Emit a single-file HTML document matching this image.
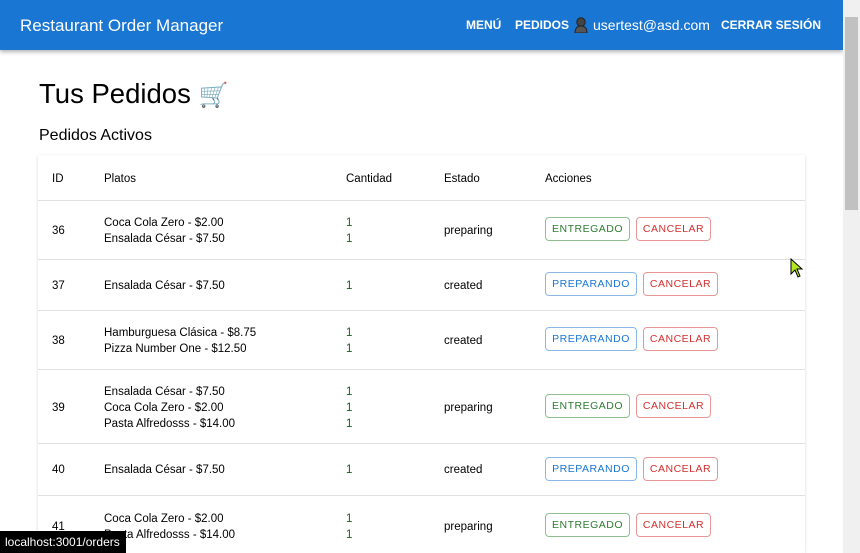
<!DOCTYPE html>
<html><head><meta charset="utf-8"><style>
*{margin:0;padding:0;box-sizing:border-box}
html,body{width:860px;height:553px;overflow:hidden}
body{background:#fff;font-family:"Liberation Sans",Arial,sans-serif;position:relative;color:#000}
.bar{position:absolute;left:0;top:0;width:843px;height:50px;background:#1976d2;box-shadow:0 2px 4px rgba(0,0,0,.3);color:#fff;z-index:2}
.bar .t{position:absolute;left:20px;top:16px;font-size:17px}
.bar .n{position:absolute;top:18px;font-size:12px;font-weight:bold;letter-spacing:0}
.sb{position:absolute;right:0;top:0;width:17px;height:553px;background:#f0f0f0;z-index:4}
.sb .th{position:absolute;left:2px;top:17px;width:13px;height:193px;background:#c1c1c1}
h1{position:absolute;left:39px;top:78px;font-size:27.5px;font-weight:normal}
h2{position:absolute;left:39px;top:127px;font-size:16px;font-weight:normal}
.card{position:absolute;left:38px;top:155px;width:767px;height:398px;background:#fff;box-shadow:0 1px 3px rgba(0,0,0,.15)}
.row{position:absolute;left:0;width:767px;border-top:1px solid #e0e0e0;font-size:11.5px}
.c{position:absolute;line-height:16px;margin-top:1px}
.q{color:#1b5e20}
.btn{position:absolute;height:24px;border:1px solid;border-radius:4px;font-size:10.5px;letter-spacing:.5px;line-height:23px;text-align:center}
.g{color:#2e7d32;border-color:#8fbf91}
.b{color:#1976d2;border-color:#8ab8e8}
.r{color:#d32f2f;border-color:#e89797}
.status{position:absolute;left:0;top:531px;width:126px;height:22px;background:#000;color:#fff;font-size:12px;line-height:22px;padding-left:5px;z-index:3}
</style></head><body>
<div class="bar"><div class="t">Restaurant Order Manager</div>
<div class="n" style="left:466px">MENÚ</div>
<div class="n" style="left:515px">PEDIDOS</div>
<svg style="position:absolute;left:574px;top:17px" width="14" height="16" viewBox="0 0 14 16"><circle cx="7" cy="5" r="4.2" fill="#444" stroke="#222"/><path d="M1 16 Q1 9 7 9 Q13 9 13 16Z" fill="#555" stroke="#222"/></svg>
<div class="n" style="left:593px;font-weight:normal;font-size:14px;top:17px">usertest@asd.com</div>
<div class="n" style="left:721px">CERRAR SESIÓN</div></div>
<h1>Tus Pedidos <span style="font-size:24px">🛒</span></h1>
<h2>Pedidos Activos</h2>
<div class="card">
<div class="row" style="top:0;height:45px;border:none"><div class="c" style="left:14px;top:15px">ID</div><div class="c" style="left:66px;top:15px">Platos</div><div class="c" style="left:308px;top:15px">Cantidad</div><div class="c" style="left:406px;top:15px">Estado</div><div class="c" style="left:507px;top:15px">Acciones</div></div>
<div class="row" style="top:45px;height:59px"><div class="c" style="left:14px;top:21px">36</div><div class="c" style="left:66px;top:13px">Coca Cola Zero - $2.00<br>Ensalada César - $7.50</div><div class="c q" style="left:308px;top:13px">1<br>1</div><div class="c" style="left:406px;top:21px">preparing</div><div class="btn g" style="left:507px;top:16px;width:85px">ENTREGADO</div><div class="btn r" style="left:598px;top:16px;width:75px">CANCELAR</div></div>
<div class="row" style="top:104px;height:51px"><div class="c" style="left:14px;top:17px">37</div><div class="c" style="left:66px;top:17px">Ensalada César - $7.50</div><div class="c q" style="left:308px;top:17px">1</div><div class="c" style="left:406px;top:17px">created</div><div class="btn b" style="left:507px;top:12px;width:92px">PREPARANDO</div><div class="btn r" style="left:605px;top:12px;width:75px">CANCELAR</div></div>
<div class="row" style="top:155px;height:59px"><div class="c" style="left:14px;top:21px">38</div><div class="c" style="left:66px;top:13px">Hamburguesa Clásica - $8.75<br>Pizza Number One - $12.50</div><div class="c q" style="left:308px;top:13px">1<br>1</div><div class="c" style="left:406px;top:21px">created</div><div class="btn b" style="left:507px;top:16px;width:92px">PREPARANDO</div><div class="btn r" style="left:605px;top:16px;width:75px">CANCELAR</div></div>
<div class="row" style="top:214px;height:74px"><div class="c" style="left:14px;top:29px">39</div><div class="c" style="left:66px;top:13px">Ensalada César - $7.50<br>Coca Cola Zero - $2.00<br>Pasta Alfredosss - $14.00</div><div class="c q" style="left:308px;top:13px">1<br>1<br>1</div><div class="c" style="left:406px;top:29px">preparing</div><div class="btn g" style="left:507px;top:24px;width:85px">ENTREGADO</div><div class="btn r" style="left:598px;top:24px;width:75px">CANCELAR</div></div>
<div class="row" style="top:288px;height:52px"><div class="c" style="left:14px;top:17px">40</div><div class="c" style="left:66px;top:17px">Ensalada César - $7.50</div><div class="c q" style="left:308px;top:17px">1</div><div class="c" style="left:406px;top:17px">created</div><div class="btn b" style="left:507px;top:13px;width:92px">PREPARANDO</div><div class="btn r" style="left:605px;top:13px;width:75px">CANCELAR</div></div>
<div class="row" style="top:340px;height:58px"><div class="c" style="left:14px;top:22px">41</div><div class="c" style="left:66px;top:14px">Coca Cola Zero - $2.00<br>Pasta Alfredosss - $14.00</div><div class="c q" style="left:308px;top:14px">1<br>1</div><div class="c" style="left:406px;top:22px">preparing</div><div class="btn g" style="left:507px;top:17px;width:85px">ENTREGADO</div><div class="btn r" style="left:598px;top:17px;width:75px">CANCELAR</div></div>
</div>
<svg style="position:absolute;left:790px;top:258px;z-index:3" width="14" height="20" viewBox="0 0 14 20"><path d="M1 1 L1 16 L5 12 L8 19 L10 18 L7 11 L12 11 Z" fill="#b5e61d" stroke="#000" stroke-width="1"/></svg>
<div class="sb"><div class="th"></div></div>
<div class="status">localhost:3001/orders</div>
</body></html>
